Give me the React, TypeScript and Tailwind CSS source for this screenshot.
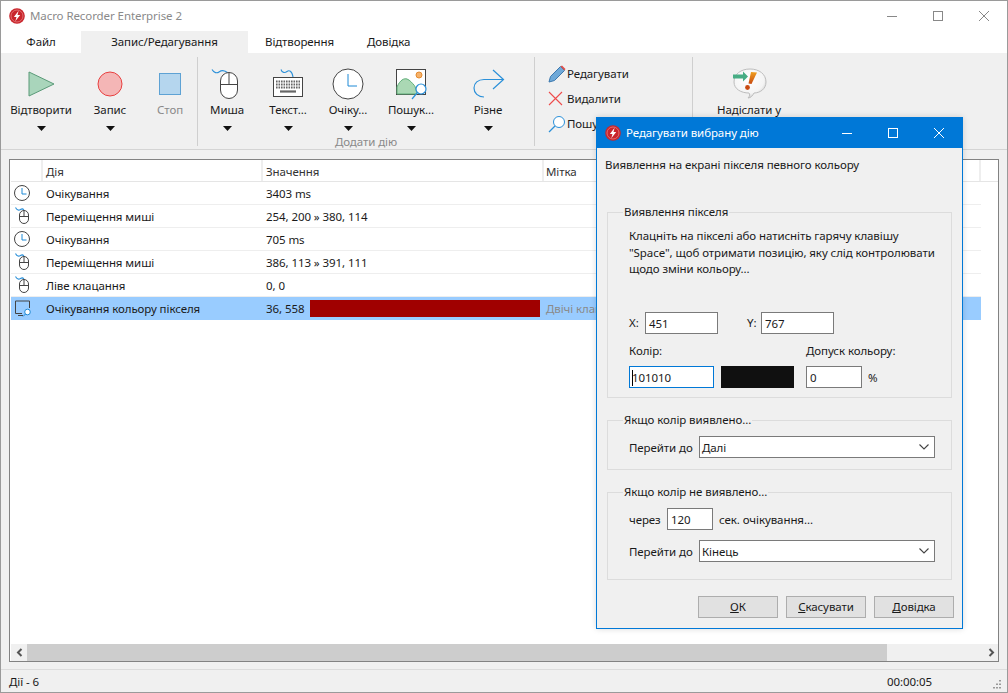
import React from "react";

const Caret = () => (
  <svg width="9" height="5" viewBox="0 0 9 5" className="block"><path d="M0 0H9L4.5 5Z" fill="#111" /></svg>
);

const Logo = ({ s = 16 }: { s?: number }) => (
  <svg width={s} height={s} viewBox="0 0 16 16" className="shrink-0">
    <circle cx="8" cy="8" r="7.8" fill="#c9252c" />
    <circle cx="8" cy="8" r="6" fill="none" stroke="#e88a8a" strokeWidth=".7" />
    <path d="M9.6 2.8 4.9 8.9H7.500L6.300 13.200 11.200 6.900H8.500Z" fill="#fff" />
  </svg>
);

const MouseIcon = () => (
  <svg width="32" height="32" viewBox="0 0 32 32">
    <path d="M1 1.500C3 5 6 5.500 8 4S13 1.500 17 5" fill="none" stroke="#2b90d9" strokeWidth="1.100" />
    <rect x="9.500" y="4.500" width="17" height="26" rx="8.500" fill="#fff" stroke="#444" strokeWidth="1" />
    <path d="M9.500 16.500H26.500M18 4.500V16.500" stroke="#444" strokeWidth="1" fill="none" />
  </svg>
);

const SmallMouse = () => (
  <svg width="18" height="19" viewBox="0 0 18 19">
    <path d="M1.500 .5C3 3.500 5 3.500 6.500 2.500S9 1.500 10 3.500" fill="none" stroke="#2b90d9" strokeWidth="1.100" />
    <rect x="5.500" y="3.500" width="9" height="13" rx="4.500" fill="#fff" stroke="#444" />
    <path d="M5.500 9.500H14.500M10 3.500V9.500" stroke="#444" fill="none" />
  </svg>
);

const KeyboardIcon = () => (
  <svg width="32" height="32" viewBox="0 0 32 32">
    <path d="M9 1.500C10 5 13 5 15 3.500S20 2.500 21 9" fill="none" stroke="#2b90d9" strokeWidth="1.100" />
    <rect x="1.500" y="9.500" width="29" height="19" fill="#fff" stroke="#444" />
    <path d="M4 13.500H28M4 16.500H28M4 19.500H28" stroke="#666" strokeWidth="1.800" strokeDasharray="1.600 .9" fill="none" />
    <path d="M8 23.500H24" stroke="#666" strokeWidth="2.200" fill="none" />
  </svg>
);

const Clock = ({ s = 32 }: { s?: number }) => (
  <svg width={s} height={s} viewBox="0 0 32 32">
    <circle cx="16" cy="16" r="15" fill="#fff" stroke="#444" strokeWidth={s < 20 ? 2 : 1} />
    <path d="M16 6V18H25" fill="none" stroke="#1f8ad6" strokeWidth={s < 20 ? 2 : 1} />
  </svg>
);

const ImageSearch = () => (
  <svg width="32" height="32" viewBox="0 0 32 32">
    <rect x="1.500" y="1.500" width="29" height="25" fill="#fff" stroke="#444" />
    <circle cx="24" cy="7" r="3" fill="#f6b26b" stroke="#e58a2e" />
    <path d="M2 26V19C5 12 9 10 12 11C15 12 17 15 19 17C20 18 21 21 22 26Z" fill="#aad8b4" stroke="#5fae78" />
    <circle cx="26" cy="21" r="5" fill="#fff" stroke="#2b90d9" strokeWidth="1.200" />
    <path d="M22 25 L17 31" stroke="#2b90d9" strokeWidth="1.200" />
  </svg>
);

const Magnifier = ({ s = 18 }: { s?: number }) => (
  <svg width={s} height={s} viewBox="0 0 18 18">
    <circle cx="11" cy="7" r="5.500" fill="#fff" stroke="#2b90d9" />
    <path d="M7 11 1 17" stroke="#2b90d9" strokeWidth="1.200" />
  </svg>
);

const RedoArrow = () => (
  <svg width="32" height="30" viewBox="0 0 32 30" className="ml-[2px]">
    <path d="M20 1 30.500 10.500 20 20M30 10.500H11C5 10.500 1 14 1 19C1 24 5 28 11 28" fill="none" stroke="#2b90d9" strokeWidth="1.200" />
  </svg>
);

const Bubble = () => (
  <svg width="34" height="32" viewBox="0 0 34 32" className="ml-[1px]">
    <defs>
      <linearGradient id="ex" x1="0" y1="0" x2="0" y2="1">
        <stop offset="0" stopColor="#f0a020" />
        <stop offset="1" stopColor="#c84a10" />
      </linearGradient>
      <radialGradient id="bb" cx=".45" cy=".35" r=".7">
        <stop offset="0" stopColor="#ffffff" />
        <stop offset=".7" stopColor="#f4f4f4" />
        <stop offset="1" stopColor="#c4c4c4" />
      </radialGradient>
    </defs>
    <path d="M17 1C26 1 33 6 33 14C33 21 27 25 21 25C20 27 18 30 15 30C17 28 17 26 16 25C8 25 1 21 1 14C1 6 8 1 17 1Z" fill="url(#bb)" stroke="#bdbdbd" />
    <path d="M18 4 24 4.500 18.500 16 15.500 15.500Z" fill="url(#ex)" />
    <circle cx="14.500" cy="19.500" r="2.400" fill="#c84a10" />
    <path d="M0 6.500H10V3.500L15 8.500L10 13.500V10.500H0Z" fill="#47ad84" />
  </svg>
);

const Pencil = () => (
  <svg width="18" height="18" viewBox="0 0 18 18">
    <path d="M1 17 2.500 11.500 12.500 1.500 16.500 5.500 6.500 15.500Z" fill="#6fa9d8" stroke="#3c78ae" />
    <path d="M12.500 1.500 16.500 5.500 17.500 4 14 .5Z" fill="#e0504a" />
  </svg>
);

const RedX = () => (
  <svg width="15" height="15" viewBox="0 0 15 15"><path d="M1 1 14 14M14 1 1 14" stroke="#ee4b4b" strokeWidth="1.100" fill="none" /></svg>
);

const ScreenSearch = () => (
  <svg width="18" height="17" viewBox="0 0 18 17">
    <path d="M8 13.500H1.500V1H15.500V8" fill="none" stroke="#444" />
    <path d="M4 15.500H9" stroke="#444" />
    <circle cx="13.500" cy="12" r="2.800" fill="#fff" stroke="#1f8ad6" />
    <path d="M11.500 14 9 16.500" stroke="#1f8ad6" />
  </svg>
);

const BigBtn = ({ label, icon, caret = true, gray = false, w, ml }: { label: string; icon: React.ReactNode; caret?: boolean; gray?: boolean; w: string; ml: string }) => (
  <div className={`flex flex-col items-center pt-[15px] ${w} ${ml}`}>
    <div className="h-[32px] flex items-center justify-center">{icon}</div>
    <div className={`mt-[2px] h-[16px] leading-[16px] whitespace-nowrap ${gray ? "text-[#8a8a8a]" : "text-[#1a1a1a]"}`}>{label}</div>
    {caret && <div className="mt-[8px]"><Caret /></div>}
  </div>
);

const SmallBtn = ({ icon, label }: { icon: React.ReactNode; label: string }) => (
  <div className="flex items-center h-[25px]">
    <div className="w-[19px] flex items-center">{icon}</div>
    <span className="text-[#1a1a1a]">{label}</span>
  </div>
);

const rows = [
  { ic: <Clock s={16} />, a: "Очікування", v: "3403 ms" },
  { ic: <SmallMouse />, a: "Переміщення миші", v: "254, 200 » 380, 114" },
  { ic: <Clock s={16} />, a: "Очікування", v: "705 ms" },
  { ic: <SmallMouse />, a: "Переміщення миші", v: "386, 113 » 391, 111" },
  { ic: <SmallMouse />, a: "Ліве клацання", v: "0, 0" },
];

const Input = ({ v, w, focus = false }: { v: string; w: string; focus?: boolean }) => (
  <div className={`h-[22px] ${w} bg-white border flex items-center px-[2px] pt-px text-[#1a1a1a] shrink-0 ${focus ? "border-[#0078d7]" : "border-[#7a7a7a] pl-[3px]"}`}>
    {focus && <span className="w-px h-[16px] bg-black -mr-px" />}
    <span>{v}</span>
  </div>
);

const Select = ({ v }: { v: string }) => (
  <div className="h-[22px] w-[236px] bg-white border border-[#7a7a7a] flex items-center justify-between pl-[2px] pr-[5px] text-[#1a1a1a]">
    <span className="pt-px">{v}</span>
    <svg width="10" height="6" viewBox="0 0 10 6"><path d="M.5.5 5 5 9.500.5" fill="none" stroke="#444" strokeWidth="1.100" /></svg>
  </div>
);

const DlgBtn = ({ pre, rest }: { pre: string; rest: string }) => (
  <div className="w-[80px] h-[22px] bg-[#e1e1e1] border border-[#adadad] flex items-center justify-center text-[#1a1a1a]">
    <span><span className="underline">{pre}</span>{rest}</span>
  </div>
);

const Fs = ({ title, h, children }: { title: string; h: string; children: React.ReactNode }) => (
  <fieldset className={`mx-[10px] border border-[#dcdcdc] ${h} pl-[21px]`}>
    <legend className="ml-[-6px] px-[1px] text-[#1a1a1a] leading-[16px]">{title}</legend>
    {children}
  </fieldset>
);

export default function App() {
  return (
    <div className="relative w-[1008px] h-[693px] overflow-hidden flex flex-col bg-[#f0f0f0] border border-[#9a9a9a] text-[11.5px] tracking-[-0.08px] font-['Noto_Sans','Open_Sans',sans-serif]">
      {/* title bar */}
      <div className="h-[30px] bg-white flex items-center pl-[8px] shrink-0">
        <Logo />
        <span className="ml-[5px] text-[#8a8a8a]">Macro Recorder Enterprise 2</span>
        <div className="ml-auto flex items-center text-[#777]">
          <svg width="46" height="30" viewBox="0 0 46 30"><path d="M18 15.500H28" stroke="#888" /></svg>
          <svg width="46" height="30" viewBox="0 0 46 30"><rect x="18.500" y="10.500" width="9" height="9" fill="none" stroke="#888" /></svg>
          <svg width="46" height="30" viewBox="0 0 46 30"><path d="M18 10 28 20M28 10 18 20" stroke="#888" fill="none" /></svg>
        </div>
      </div>
      {/* tabs */}
      <div className="h-[22px] bg-white flex items-center shrink-0 text-[#1a1a1a]">
        <div className="w-[80px] text-center">Файл</div>
        <div className="w-[167px] h-full bg-[#f0f0f0] flex items-center justify-center">Запис/Редагування</div>
        <div className="w-[119px] pl-[17px]">Відтворення</div>
        <div>Довідка</div>
      </div>
      {/* ribbon */}
      <div className="h-[97px] border-b border-[#d4d4d4] flex shrink-0">
        <BigBtn w="w-[62px]" ml="ml-[9px]" label="Відтворити" icon={<svg width="28" height="26" viewBox="0 0 28 26"><path d="M2 1 27 13 2 25Z" fill="#a9d5bb" stroke="#5a9a78" /></svg>} />
        <BigBtn w="w-[62px]" ml="ml-[7px]" label="Запис" icon={<svg width="26" height="26" viewBox="0 0 26 26"><circle cx="13" cy="13" r="12" fill="#f4b6b6" stroke="#e84040" /></svg>} />
        <BigBtn w="w-[40px]" ml="ml-[9px]" label="Стоп" gray caret={false} icon={<svg width="24" height="24" viewBox="0 0 24 24"><rect x="1.500" y="1.500" width="21" height="21" fill="#b5d6ee" stroke="#5ea2d4" /></svg>} />
        <div className="w-px h-[89px] mt-[4px] ml-[7px] bg-[#cfcfcf]" />
        <div className="w-[336px] flex flex-col relative">
          <div className="flex">
            <BigBtn w="w-[50px]" ml="ml-[4px]" label="Миша" icon={<MouseIcon />} />
            <BigBtn w="w-[56px]" ml="ml-[8px]" label="Текст..." icon={<KeyboardIcon />} />
            <BigBtn w="w-[56px]" ml="ml-[4px]" label="Очіку..." icon={<Clock />} />
            <BigBtn w="w-[60px]" ml="ml-[5px]" label="Пошук..." icon={<ImageSearch />} />
            <BigBtn w="w-[60px]" ml="ml-[17px]" label="Різне" icon={<RedoArrow />} />
          </div>
          <div className="mt-[3px] text-center text-[#8a8a8a] leading-[16px]">Додати дію</div>
        </div>
        <div className="w-px h-[89px] mt-[4px] bg-[#cfcfcf]" />
        <div className="w-[157px] pl-[13px] pt-[8px] flex flex-col">
          <SmallBtn icon={<Pencil />} label="Редагувати" />
          <SmallBtn icon={<RedX />} label="Видалити" />
          <SmallBtn icon={<Magnifier />} label="Пошук" />
        </div>
        <div className="w-px h-[89px] mt-[4px] bg-[#cfcfcf]" />
        <BigBtn w="w-[90px]" ml="ml-[11px]" label="Надіслати у" caret={false} icon={<Bubble />} />
      </div>
      {/* list */}
      <div className="mx-[8px] mt-[9px] h-[503px] bg-white border border-[#828282] flex flex-col shrink-0 pl-px">
        <div className="h-[22px] flex border-b border-[#e5e5e5] text-[#333] shrink-0">
          <div className="w-[32px] border-r-2 border-[#eeeeee]" />
          <div className="w-[220px] pl-[3px] border-r-2 border-[#eeeeee] leading-[24px]">Дія</div>
          <div className="w-[281px] pl-[3px] border-r-2 border-[#eeeeee] leading-[24px]">Значення</div>
          <div className="w-[437px] pl-[2px] border-r-2 border-[#eeeeee] leading-[24px]">Мітка</div>
        </div>
        <div className="flex-1">
          {rows.map((r, i) => (
            <div key={i} className="h-[23px] w-[970px] flex items-center border-b border-[#eeeeee] text-[#1a1a1a]">
              <div className="w-[32px] pl-[3px] flex items-center">{r.ic}</div>
              <div className="w-[220px] pl-[3px] pt-px">{r.a}</div>
              <div className="pl-[3px] pt-px">{r.v}</div>
            </div>
          ))}
          <div className="h-[23px] w-[970px] flex items-center bg-[#99ccff] text-[#1a1a1a]">
            <div className="w-[32px] pl-[3px] flex items-center"><ScreenSearch /></div>
            <div className="w-[220px] pl-[3px] pt-px">Очікування кольору пікселя</div>
            <div className="w-[281px] pl-[3px] flex items-center">
              <span className="w-[44px] pt-px">36, 558</span>
              <span className="w-[230px] h-[17px] bg-[#a00000]" />
            </div>
            <div className="pl-[2px] pt-px text-[#8a8a8a]">Двічі клацніть</div>
          </div>
        </div>
        <div className="h-[17px] bg-[#f0f0f0] flex items-center shrink-0">
          <div className="w-[16px] flex justify-center">
            <svg width="7" height="9" viewBox="0 0 7 9"><path d="M5.500 1 2 4.500 5.500 8" fill="none" stroke="#555" strokeWidth="2" /></svg>
          </div>
          <div className="w-[860px] h-full bg-[#cdcdcd]" />
          <div className="flex-1 flex justify-end pr-[3px]">
            <svg width="7" height="9" viewBox="0 0 7 9"><path d="M1.500 1 5 4.500 1.500 8" fill="none" stroke="#555" strokeWidth="2" /></svg>
          </div>
        </div>
      </div>
      {/* status */}
      <div className="mt-[7px] flex-1 border-t border-[#dcdcdc] flex items-center pl-[8px] pt-px text-[#1a1a1a] relative">
        <span>Дії - 6</span>
        <span className="ml-auto mr-[75px]">00:00:05</span>
        <svg width="10" height="10" viewBox="0 0 10 10" className="absolute right-[6px] bottom-[3px]">
          <path d="M8 1h2v1.500H8zM5 4.500h2V6H5zM8 4.500h2V6H8zM2 8h2v1.500H2zM5 8h2v1.500H5zM8 8h2v1.500H8z" fill="#9a9a9a" />
        </svg>
      </div>

      {/* dialog */}
      <div className="absolute left-[595px] top-[116px] w-[367px] h-[512px] bg-[#f0f0f0] border border-[#0078d7] flex flex-col shadow-[0_0_6px_rgba(0,0,0,0.15)]">
        <div className="h-[30px] bg-[#0078d7] flex items-center pl-[8px] shrink-0 text-white">
          <Logo />
          <span className="ml-[5px]">Редагувати вибрану дію</span>
          <div className="ml-auto flex">
            <svg width="46" height="30" viewBox="0 0 46 30"><path d="M18 15.500H28" stroke="#fff" /></svg>
            <svg width="46" height="30" viewBox="0 0 46 30"><rect x="18.500" y="10.500" width="9" height="9" fill="none" stroke="#fff" /></svg>
            <svg width="46" height="30" viewBox="0 0 46 30"><path d="M18 10 28 20M28 10 18 20" stroke="#fff" fill="none" /></svg>
          </div>
        </div>
        <div className="pl-[8px] mt-[9px] h-[16px] leading-[16px] text-[#1a1a1a]">Виявлення на екрані пікселя певного кольору</div>
        <div className="mt-[31px]">
          <Fs title="Виявлення пікселя" h="h-[194px]">
            <div className="text-[#1a1a1a] leading-[16.500px] mt-[8px] h-[50px] whitespace-nowrap">
              Клацніть на пікселі або натисніть гарячу клавішу<br />
              "Space", щоб отримати позицію, яку слід контролювати<br />
              щодо зміни кольору...
            </div>
            <div className="flex items-center mt-[34px] text-[#1a1a1a]">
              <span className="w-[16px]">X:</span>
              <Input v="451" w="w-[73px]" />
              <span className="ml-[29px] w-[14px]">Y:</span>
              <Input v="767" w="w-[73px]" />
            </div>
            <div className="flex mt-[9px] h-[16px] leading-[16px] text-[#1a1a1a]">
              <span className="w-[177px]">Колір:</span>
              <span>Допуск кольору:</span>
            </div>
            <div className="flex items-center mt-[7px] text-[#1a1a1a]">
              <Input v="101010" w="w-[85px]" focus />
              <div className="ml-[7px] w-[73px] h-[22px] bg-[#101010]" />
              <div className="ml-[12px]"><Input v="0" w="w-[56px]" /></div>
              <span className="ml-[6px] pt-px">%</span>
            </div>
          </Fs>
        </div>
        <div className="mt-[14px]">
          <Fs title="Якщо колір виявлено..." h="h-[58px]">
            <div className="flex items-center mt-[8px] text-[#1a1a1a]">
              <span className="w-[70px] pt-px">Перейти до</span>
              <Select v="Далі" />
            </div>
          </Fs>
        </div>
        <div className="mt-[14px]">
          <Fs title="Якщо колір не виявлено..." h="h-[96px]">
            <div className="flex items-center mt-[8px] text-[#1a1a1a]">
              <span className="w-[38px] pt-px">через</span>
              <Input v="120" w="w-[46px]" />
              <span className="ml-[6px] pt-px">сек. очікування...</span>
            </div>
            <div className="flex items-center mt-[10px] text-[#1a1a1a]">
              <span className="w-[70px] pt-px">Перейти до</span>
              <Select v="Кінець" />
            </div>
          </Fs>
        </div>
        <div className="mt-[16px] pl-[101px] flex gap-[8px]">
          <DlgBtn pre="О" rest="К" />
          <DlgBtn pre="С" rest="касувати" />
          <DlgBtn pre="Д" rest="овідка" />
        </div>
      </div>
    </div>
  );
}
